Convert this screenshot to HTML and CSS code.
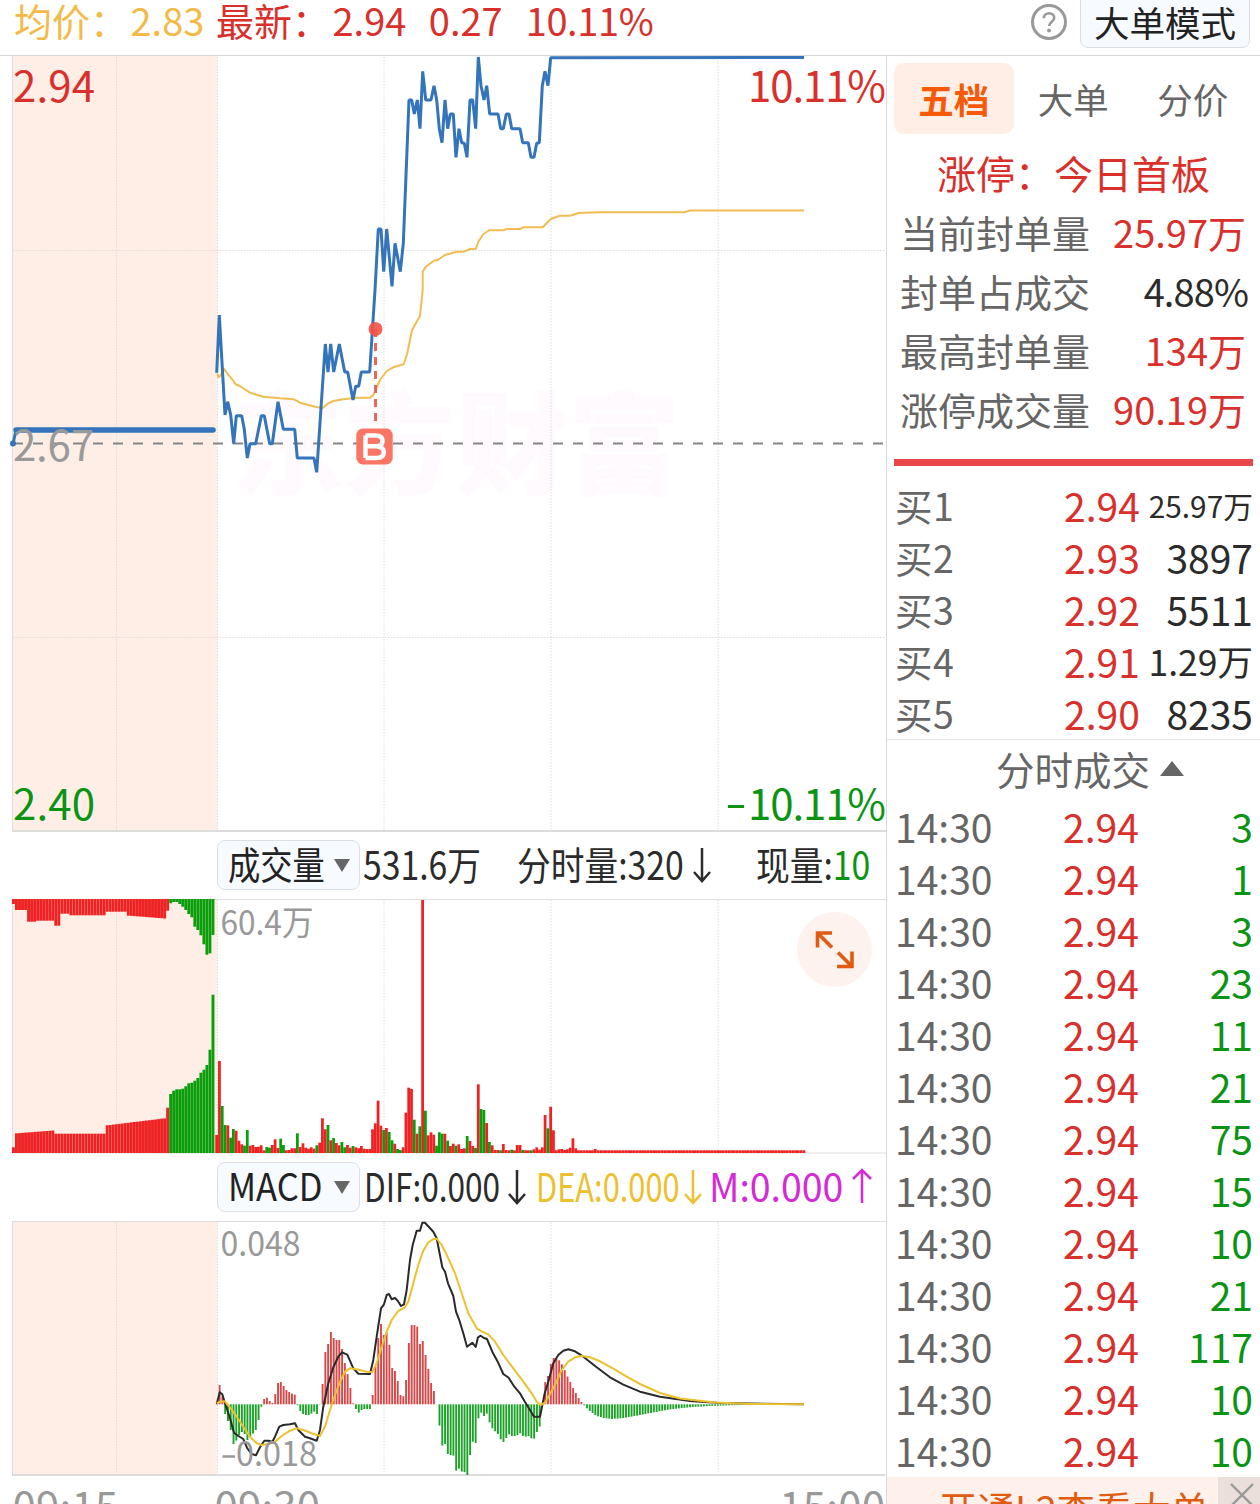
FILE: index.html
```html
<!DOCTYPE html>
<html lang="zh-CN">
<head>
<meta charset="utf-8">
<title>分时</title>
<link rel="stylesheet" href="styles.css">
</head>
<body>
<header class="top">
  <div class="quote avg"><span>均价：</span><b>2.83</b></div>
  <div class="quote last"><span>最新：</span><b>2.94</b><b>0.27</b><b>10.11%</b></div>
  <svg class="help" viewBox="0 0 38 38"><circle cx="19" cy="19" r="16.5"/><path d="M13.8 15.2c0-3 2.200-5 5.200-5s5.200 2 5.200 4.700c0 3.600-5.100 4-5.100 8.100"/><circle class="dot" cx="19" cy="27.500" r="1.900"/></svg>
  <button class="mode">大单模式</button>
</header>
<main class="board">
  <section class="charts">
    <svg class="plot" id="price" viewBox="0 56 886 776" height="776">
      <rect class="auction" x="13" y="56" width="204" height="775"/>
      <text class="mark" x="232" y="486" textLength="448" lengthAdjust="spacingAndGlyphs">东方财富</text>
      <path class="grid" d="M116.500 57V830M217.500 57V830M384 57V830M551 57V830M718 57V830M13 250.500H885M13 637.500H885"/>
      <path class="edge" d="M12.500 56V831"/><path class="base" d="M12 831H886"/>
      <path class="mid" d="M13 443.500H885"/>
      <path class="preline" d="M16 430H213"/><path class="line-price" d="M13 444L16 430"/><circle cx="13" cy="443.500" r="3" fill="#3374bb"/>
      <text class="lbl up" x="13" y="102" textLength="82">2.94</text>
      <text class="lbl up" x="748" y="102" textLength="138">10.11%</text>
      <text class="lbl flat" x="13" y="461" textLength="81">2.67</text>
      <text class="lbl down" x="13" y="820" textLength="82">2.40</text>
      <path class="minus" d="M728 806.500H744"/>
      <text class="lbl down" x="748" y="820" textLength="138">10.11%</text>
      <g id="price-lines"></g>
      <path class="buyline" d="M375.500 329V423"/><circle cx="375.500" cy="329" r="7" fill="#f25345" opacity=".9"/>
      <rect x="356.300" y="428.500" width="36.400" height="36" rx="6.500" fill="#fb7565"/>
      <path class="badge-b" d="M365.500 435.500V458M365.500 435.500H376.500Q382.500 436 382.500 441Q382.500 446 376.500 446.300H366M376.500 446.300Q383.800 447 383.800 452.300Q383.800 458 376.500 458H365.500"/>
    </svg>
    <div class="metrics">
      <button class="pick"><span>成交量</span><i></i></button>
      <div class="m m-total"><span>531.6万</span></div>
      <div class="m m-min"><span>分时量:320</span></div>
      <svg class="arrow" viewBox="0 0 22 40"><path d="M11 3V36M3 27L11 36L19 27"/></svg>
      <div class="m m-now"><span>现量:<em>10</em></span></div>
    </div>
    <svg class="plot" id="volume" viewBox="0 898 886 256" height="256">
      <rect class="auction" x="13" y="899" width="204" height="254"/>
      <path class="grid" d="M116.500 900V1152M217.500 900V1152M384 900V1152M551 900V1152M718 900V1152"/>
      <path class="edge" d="M12.500 899V1153M12 899.500H886M12 1153H886"/>
      <g id="volume-bars"></g>
      <text class="sub" x="220.500" y="935" textLength="93" lengthAdjust="spacingAndGlyphs">60.4万</text>
      <circle cx="834.500" cy="949.500" r="37.500" fill="#fdf2ed"/>
      <path class="expand" d="M817.500 947.500V933H832M818 933.500L832 947.500M852 951.500V966.500H837M851.500 966L838 952.500"/>
    </svg>
    <div class="metrics">
      <button class="pick macd"><span>MACD</span><i></i></button>
      <div class="m m-dif"><span>DIF:0.000</span></div>
      <svg class="arrow" viewBox="0 0 22 40"><path d="M11 3V36M3 27L11 36L19 27"/></svg>
      <div class="m m-dea"><span>DEA:0.000</span></div>
      <svg class="arrow dea" viewBox="0 0 22 40"><path d="M11 3V36M3 27L11 36L19 27"/></svg>
      <div class="m m-bar"><span>M:0.000</span></div>
      <svg class="arrow bar" viewBox="0 0 22 40"><path d="M11 36V3M2 12L11 3L20 12"/></svg>
    </div>
    <svg class="plot" id="macd" viewBox="0 1220 886 258" height="258">
      <rect class="auction" x="13" y="1221" width="204" height="254"/>
      <path class="grid" d="M116.500 1222V1474M217.500 1222V1474M384 1222V1474M551 1222V1474M718 1222V1474"/>
      <path class="edge" d="M12.500 1221V1475M12 1221.500H886"/><path class="base" d="M12 1475H885"/>
      <g id="macd-bars"></g>
      <text class="sub" x="220.500" y="1256" textLength="80" lengthAdjust="spacingAndGlyphs">0.048</text>
      <path class="minus gray" d="M222.500 1456.500H235"/>
      <text class="sub" x="236" y="1466" textLength="81" lengthAdjust="spacingAndGlyphs">0.018</text>
    </svg>
    <div class="times"><span>09:15</span><span>09:30</span><span>15:00</span></div>
  </section>
  <aside class="side">
    <nav class="tabs"><span class="on">五档</span><span>大单</span><span>分价</span></nav>
    <h2>涨停：今日首板</h2>
    <dl class="limit">
      <div><dt>当前封单量</dt><dd>25.97万</dd></div>
      <div><dt>封单占成交</dt><dd class="dark">4.88%</dd></div>
      <div><dt>最高封单量</dt><dd>134万</dd></div>
      <div><dt>涨停成交量</dt><dd>90.19万</dd></div>
    </dl>
    <div class="ratio"></div>
    <ul class="rows bids">
      <li><span>买1</span><b>2.94</b><i class="xs">25.97万</i></li>
      <li><span>买2</span><b>2.93</b><i>3897</i></li>
      <li><span>买3</span><b>2.92</b><i>5511</i></li>
      <li><span>买4</span><b>2.91</b><i class="sm">1.29万</i></li>
      <li><span>买5</span><b>2.90</b><i>8235</i></li>
    </ul>
    <h3>分时成交<i></i></h3>
    <ul class="rows trades">
      <li><span>14:30</span><b>2.94</b><i>3</i></li>
      <li><span>14:30</span><b>2.94</b><i>1</i></li>
      <li><span>14:30</span><b>2.94</b><i>3</i></li>
      <li><span>14:30</span><b>2.94</b><i>23</i></li>
      <li><span>14:30</span><b>2.94</b><i>11</i></li>
      <li><span>14:30</span><b>2.94</b><i>21</i></li>
      <li><span>14:30</span><b>2.94</b><i>75</i></li>
      <li><span>14:30</span><b>2.94</b><i>15</i></li>
      <li><span>14:30</span><b>2.94</b><i>10</i></li>
      <li><span>14:30</span><b>2.94</b><i>21</i></li>
      <li><span>14:30</span><b>2.94</b><i>117</i></li>
      <li><span>14:30</span><b>2.94</b><i>10</i></li>
      <li><span>14:30</span><b>2.94</b><i>10</i></li>
    </ul>
    <div class="promo"><span>开通L2查看大单</span><svg viewBox="0 0 42 36"><path d="M13 7L35 29M35 7L13 29"/></svg></div>
  </aside>
</main>
<script src="charts.js"></script>
</body>
</html>
```
FILE: styles.css
```css
* { box-sizing: border-box; margin: 0; padding: 0; }
html, body { height: 1504px; overflow: hidden; }
body { width: 1260px; background: #fff; color: #2b2b2b; font-family: "Noto Sans CJK SC", "Noto Sans", sans-serif; }
b, i, em { font-weight: 400; font-style: normal; }
ul { list-style: none; }
button { font: inherit; color: #222; background: #f7faff; border: 1px solid #dcdfe8; border-radius: 8px; }

.top { height: 56px; display: flex; border-bottom: 1px solid #d6d7da; padding-left: 14px; font-size: 38px; line-height: 39px; white-space: nowrap; }
.quote { display: flex; }
.quote b { margin-left: 2.500px; }
.avg { color: #f3ba48; width: 202px; }
.last { color: #d9302c; }
.last b + b { margin-left: 22.500px; }
.last b:last-child { margin-left: 23px; letter-spacing: -.4px; }
.help { width: 38px; height: 38px; margin: 3px 12px 0 auto; fill: none; stroke: #999; stroke-width: 3; }
.help path { stroke-width: 2.600; }
.help .dot { fill: #999; stroke: none; }
.mode { width: 170px; height: 58px; margin: -10px 10px 0 0; font-size: 35.500px; line-height: 36px; padding-top: 6px; }

.board { display: grid; grid-template-columns: 886px 374px; height: 1448px; }
.charts { display: flex; flex-direction: column; overflow: hidden; }
.plot { display: block; width: 886px; flex: none; }
.auction { fill: #feeee6; }
.grid { stroke: #dcdcdc; stroke-width: 1; stroke-dasharray: 1.500 1.500; fill: none; }
.edge { stroke: #dedede; fill: none; }
.base { stroke: #dcdcdc; stroke-width: 1.800; }
.mid { stroke: #858585; stroke-width: 2; stroke-dasharray: 10 10; }
.mark { font-size: 112px; font-weight: 900; fill: #fefafe; }
.lbl { font-size: 42px; }
.sub { font-size: 34px; fill: #999; }
.up { fill: #d9302c; }
.down { fill: #0b9414; }
.flat { fill: #999; }
.minus { stroke: #0b9414; stroke-width: 3; }
.minus.gray { stroke: #999; stroke-width: 2.500; }
.preline { stroke: #3374bb; stroke-width: 5.500; stroke-linecap: round; }
.line-price { fill: none; stroke: #3374bb; stroke-width: 3; stroke-linejoin: bevel; }
.line-avg { fill: none; stroke: #efbd52; stroke-width: 2; stroke-linejoin: round; }
.line-dif { fill: none; stroke: #2a2a2a; stroke-width: 2; stroke-linejoin: round; }
.line-dea { fill: none; stroke: #ecc02e; stroke-width: 2; stroke-linejoin: round; }
.buyline { stroke: #e8675c; stroke-width: 3; stroke-dasharray: 8 6; }
.badge-b { fill: none; stroke: #fff; stroke-width: 4.500; stroke-linejoin: round; }
.expand { fill: none; stroke: #e05a12; stroke-width: 3.600; }
.bar-r { fill: #ee2222; }
.bar-g { fill: #0b9e0b; }
.thin-r { fill: #d94848; }
.thin-g { fill: #1ea32a; }

.metrics { height: 66px; flex: none; display: flex; align-items: flex-start; padding: 8px 0 0 217px; font-size: 39px; line-height: 46px; white-space: nowrap; }
.pick { width: 143px; height: 50px; flex: none; display: flex; justify-content: space-between; align-items: center; padding: 0 9px 4px 10px; line-height: 44px; }
.pick span { display: block; width: 99px; font-size: 38px; transform: scaleX(.85); transform-origin: 0 50%; }
.pick.macd span { transform: scaleX(.91); }
.pick i { border: 8px solid transparent; border-top: 13px solid #666; border-bottom: 0; margin-top: 4px; }
.m { flex: none; }
.m span { display: inline-block; transform: scaleX(.865); transform-origin: 0 50%; }
.m em { color: #0b9414; }
.m-total { width: 117px; margin-left: 3px; }
.m-min { width: 168px; margin-left: 37px; }
.m-now { width: 116px; margin-left: 43px; }
.m-dif { width: 137px; margin-left: 4px; }
.m-dif span { transform: scaleX(.81); }
.m-dea { width: 145px; margin-left: 8px; color: #ecc02e; }
.m-dea span { transform: scaleX(.79); }
.m-bar { width: 136px; margin-left: 5px; color: #d42bd4; }
.m-bar span { transform: scaleX(.96); }
.arrow { width: 22px; height: 40px; flex: none; margin-left: 6px; margin-top: 5px; fill: none; stroke: #2b2b2b; stroke-width: 2.500; }
.m-dif + .arrow { margin-left: 5px; }
.arrow.dea { stroke: #ecc02e; margin-left: 1px; }
.arrow.bar { stroke: #d42bd4; margin-left: 6px; }
.times { display: flex; height: 26px; flex: none; padding: 0 0 0 12.500px; font-size: 42px; letter-spacing: .2px; line-height: 54px; color: #999; overflow: hidden; }
.times span + span { margin-left: 96px; }
.times span + span + span { margin-left: 459px; }

.side { border-left: 1px solid #d6d7da; display: flex; flex-direction: column; overflow: hidden; white-space: nowrap; }
.tabs { display: flex; padding: 7px 0 0 7px; font-size: 35.500px; line-height: 71px; color: #666; }
.tabs span { width: 119.500px; height: 71px; text-align: center; border-radius: 10px; }
.tabs .on { background: #feeee6; color: #f65a06; font-weight: 700; }
.side h2 { font-size: 39px; font-weight: 400; color: #d9302c; text-align: center; line-height: 60px; padding-top: 8px; }
.limit { font-size: 38px; line-height: 60px; padding: 0 14px 0 13px; }
.limit div { display: flex; justify-content: space-between; height: 59px; }
.limit dt { color: #666; }
.limit dd { color: #d9302c; }
.limit dd.dark { color: #2b2b2b; letter-spacing: -.9px; margin-right: -2px; }
.ratio { height: 7px; background: #e94649; margin: 21px 7px 12px; flex: none; }
.rows { font-size: 39px; line-height: 54px; padding: 0 7px 0 8px; }
.rows li { display: grid; grid-template-columns: 169px 80px 1fr; height: 52px; }
.rows span { color: #666; }
.rows b { color: #d9302c; }
.rows i { text-align: right; direction: rtl; }
.bids span { font-size: 37.500px; letter-spacing: .5px; }
.bids .xs { font-size: 29.800px; }
.bids .sm { font-size: 35.500px; }
.trades i { color: #0b9414; }
.trades b { margin-left: -1px; }
.side h3 { font-size: 38.500px; font-weight: 400; color: #666; height: 60px; line-height: 54px; border-top: 1px solid #e4e4e4; margin-top: 1px; padding: 0 0 3px 109px; display: flex; align-items: center; flex: none; }
.side h3 i { border: 12px solid transparent; border-bottom: 15px solid #666; border-top: 0; margin-left: 10px; }
.promo { margin-top: 2px; height: 36px; flex: none; display: flex; justify-content: space-between; background: #fef1ec; color: #df5c10; font-size: 38px; line-height: 62px; padding-left: 52px; overflow: hidden; }
.promo svg { width: 42px; height: 36px; background: #eadfdb; border-bottom-left-radius: 9px; fill: none; stroke: #999; stroke-width: 2.400; }
```
FILE: charts.js
```js
const STEP = 8.35;
const put = (id, html) => { document.getElementById(id).insertAdjacentHTML('beforeend', html); };
// Points are stored in thirds of a pixel from the origin (ox, oy).
const pts = (ox, oy, s) => s.trim().split(/\s+/).map(p => {
  const [x, y] = p.split(',').map(Number);
  return (ox + x / 3).toFixed(1) + ',' + (oy + y / 3).toFixed(1);
}).join(' ');
const line = (cls, ...parts) => `<polyline class="${cls}" points="${parts.join(' ')}"/>`;

put('price-lines',
  line('line-avg',
    pts(200, 290, '52,250 56,262 63,255 72,236 85,255 92,262 107,283 120,288 150,308 190,320 240,325 282,328 300,338 345,350 368,354 385,340 400,333 430,328 470,323 510,323 520,315 540,270 560,243 580,232 611,223 622,190 636,120 660,78 668,0'),
    pts(340, 50, '248,665 257,650 282,632 295,629 315,615 350,605 372,605 390,597 408,596 415,575 430,553 447,541 490,541 500,537 540,537 550,532 608,532 632,507 660,497 690,497 716,489 780,487'),
    '684,212.2 690,210.500 804,210.500') +
  line('line-price',
    pts(200, 290, '50,248 58,75 75,375 83,335 92,375 101,461 109,377 125,377 133,418 142,504 150,461 167,461 184,377 193,377 209,461 217,461 234,335 250,418 284,418 292,504 342,504 350,547 376,162 384,246 392,162 401,246 418,162 434,246 443,246 459,330 467,289 476,289 484,246 509,246 525,0'),
    pts(340, 50, '115,537 123,537 131,665 140,537 156,709 165,580 181,665 190,580 207,150 215,150 223,192 232,150 240,236 248,64 257,150 273,150 282,107 290,150 298,236 306,278 315,150 323,236 331,192 340,192 348,322 357,236 365,278 373,280 381,322 390,150 398,150 407,236 415,21 423,107 432,150 440,107 449,192 474,192 482,236 490,236 499,192 507,192 515,236 540,236 548,278 565,278 573,322 582,322 590,280 598,278 607,107 615,64 624,107 632,23'),
    '804,57.500'));

// Call auction: matched volume rises from the bottom, unmatched hangs from the top.
const auctionTop = i => i < 1 ? 42 : i < 5 ? 60 : i < 8 ? 95 : i < 14 ? 92 : i < 16 ? 107 : i < 19 ? 71 : i < 31 ? 76 : i < 38 ? 65 : i < 51 ? 77 + (i - 38) * .7 : 62;
const auctionLow = i => i < 1 ? 771 : i < 14 ? 729 - (i - 1) * .7 : i < 31 ? 730 : i < 51 ? 705 - (i - 31) * 1.1 : 652;
const topGreen = [40, 36, 36, 42, 50, 60, 72, 82, 110, 120, 136, 163, 194, 190, 135];
const lowGreen = [611, 601, 597, 597, 595, 588, 579, 577, 571, 563, 547, 538, 524, 478, 313];
let bars = '';
for (let i = 0; i < 67; i++) {
  const green = i >= 52, x = (12 + i * 3.023).toFixed(2);
  const t = (green ? topGreen[i - 52] : auctionTop(i)) - 27;
  const b = 788 - (green ? lowGreen[i - 52] : auctionLow(i));
  const c = green ? 'bar-g' : 'bar-r';
  bars += `<rect class="${c}" x="${x}" y="899" width="2.900" height="${(t / 3).toFixed(1)}"/>`;
  bars += `<rect class="${c}" x="${x}" y="${(1153 - b / 3).toFixed(1)}" width="2.900" height="${(b / 3).toFixed(1)}"/>`;
}
const vol = ('315 93 228g 285g 286 323g 297g 302 332 343 347g 300g 347 345 351 350 346 361 351g 353g 345 328 354 326g 345g 361 360 355 355 310g 351 340 353 356 352 356 346g 338 265 298 285g 331 324g 339 346 336g 352g 345 353 348g 352 355 348 356 357 357 298 280 212 287 300g 294 306g 331g 341 357g 360g 352 248 173 177 269g 311 289g -390 242g 316 307 314 347g 307g 311g 311 332g 348 341 347g 343 357 355 318g 333 348 354g 163 237g 240g 279 336g 346 360 360 361g 342 360 361 359g 361 345 345 360g 361 361 361g 358 352 359 352 255 295g 230 301 361 358 357 360 358 353 325 355').split(' ');
while (vol.length < 212) vol.push(vol.length === 136 ? '357' : '361');
vol.forEach((v, i) => {
  const h = (369 - parseInt(v, 10)) / 3, x = 210 + (20 + STEP * i) / 3 - 1.4;
  bars += `<rect class="bar-${v.endsWith('g') ? 'g' : 'r'}" x="${x.toFixed(2)}" y="${(1153 - h).toFixed(1)}" width="2.780" height="${h.toFixed(1)}"/>`;
});
put('volume-bars', bars);

const hist = ('583 525 560 612 633 660 702 692 676 666 672 690 680 671 660 630 590 567 563 573 579 552 519 516 528 540 546 551 554 586 603 612 615 615 611 605 612 584 522 426 402 366 384 390 390 417 459 492 534 580 597 608 600 597 597 597 555 470 384 342 375 367 405 474 483 513 555 559 510 399 345 345 350 402 393 435 477 519 543 583 647 707 702 732 735 737 782 776 785 786 795 735 695 699 625 608 618 611 637 655 664 672 688 696 684 673 678 678 675 670 678 680 678 685 686 666 650 583 516 498 462 444 447 451 463 480 500 516 534 549 564 576 586 595 603 609 615 619 621 624 625 626 627 626 626 625 624 623 621 620 618 617 615 614 612 610 609 607 606 604').split(' ').map(Number);
while (hist.length < 196) hist.push(583 + 21 * Math.pow(.925, hist.length - 159));
let h = '';
hist.forEach((v, i) => {
  const d = (v - 583) / 3, x = 210 + (20 + STEP * i) / 3 - .8;
  h += `<rect class="thin-${d > 0 ? 'g' : 'r'}" x="${x.toFixed(2)}" y="${(1404.3 + Math.min(d, 0)).toFixed(1)}" width="1.900" height="${Math.abs(d).toFixed(1)}"/>`;
});
h += line('line-dif',
  pts(210, 1210, '20,583 29,547 37,553 45,580 60,625 72,668 85,678 100,687 112,715 125,732 138,736 150,712 163,692 175,692 187,695 195,680 208,650 220,645 240,643 255,640 265,660 285,680 300,685 320,692 330,660 340,590 355,520 370,472 385,440 396,427 412,434 430,475 445,491 480,492 490,450 500,380 513,295 522,283 530,255 537,252 545,268 555,264 563,272 573,288 582,283 590,240 600,150 608,105 620,62 630,62 637,38 645,38 670,65'),
  pts(420, 1210, '50,85 58,125 67,172 75,185 84,220 100,258 108,305 117,328 130,370 141,410 157,398 167,411 174,382 182,377 192,384 201,387 217,425 233,455 250,492 266,503 283,530 300,550 315,576 330,600 342,620 360,620 374,550 385,515 400,460 415,435 430,422 445,418 465,424 490,440 530,472 570,502 610,524 660,545 720,560'),
  '690,1401 720,1403 804,1404.300');
h += line('line-dea',
  pts(210, 1210, '20,580 30,575 45,574 60,592 80,620 100,650 120,680 140,700 155,705 175,702 195,695 215,678 240,662 260,655 280,660 305,670 330,678 345,650 360,600 375,555 390,515 405,485 420,475 440,478 470,485 487,486 500,460 515,410 530,365 545,330 565,303 585,292 595,275 610,220 625,165 640,122 655,97 670,87'),
  pts(420, 1210, '50,86 65,105 85,145 105,190 125,250 145,310 170,355 185,364 205,373 225,395 250,435 280,475 310,515 335,550 350,575 362,585 375,578 390,552 405,525 425,480 445,455 465,442 485,438 510,442 540,454 580,476 620,500 660,522 720,549'),
  '680,1398.500 715,1402.500 750,1404 804,1404.300');
put('macd-bars', h);
```
